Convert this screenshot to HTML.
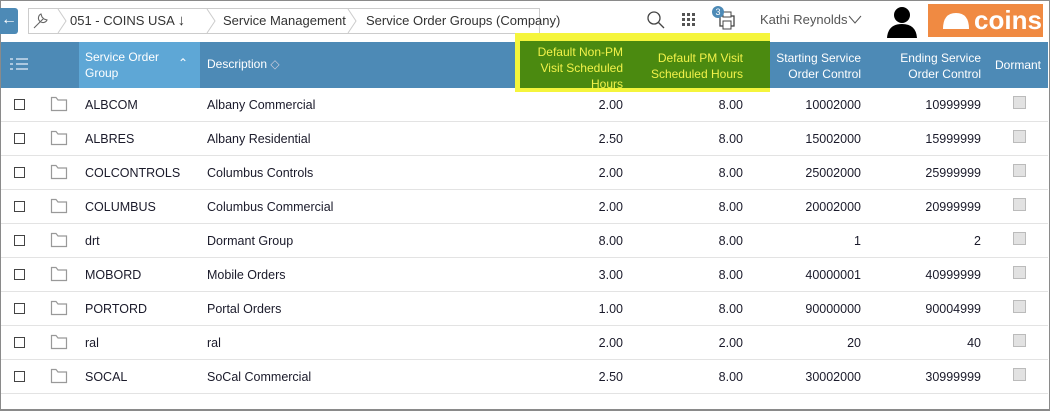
<!DOCTYPE html><html><head><style>
body{margin:0;width:1050px;height:410px;overflow:hidden;font-family:"Liberation Sans",sans-serif;background:#fff;position:relative}
.frame{position:absolute;left:0;top:0;width:1048px;height:408px;border:1px solid #8a8a8a;border-bottom-width:2px}
.abs{position:absolute}
.crumb{position:absolute;top:8px;height:24px;border:1px solid #ccc;background:#fff;font-size:13px;color:#333;line-height:24px}
.hdr{position:absolute;top:42px;left:1px;width:1047px;height:46px;background:#4d8ab6}
.hc{position:absolute;color:#fff;font-size:12px;line-height:16px}
.row{position:absolute;left:1px;width:1047px;height:33px;border-bottom:1px solid #e3e3e3;font-size:12.5px;color:#1a1a2a}
.row span{position:absolute;top:10px}
.cb{position:absolute;left:13px;top:11px;width:9px;height:9px;border:1px solid #444}
.fd{position:absolute;left:49px;top:8px}
.dm{position:absolute;left:1012px;top:8px;width:11px;height:11px;border:1px solid #bbb;background:#e2e2e2}
.r{text-align:right}
</style></head><body>
<div class="frame"></div>
<div class="abs" style="left:0;top:8px;width:18px;height:26px;background:#4d8ab6;border-radius:0 3px 3px 0;color:#fff;font-size:16px;line-height:24px;text-align:center">←</div>
<div class="crumb" style="left:28px;width:510px"></div>
<svg class="abs" style="left:30px;top:9px" width="520" height="24"><g fill="none" stroke="#ccc"><path d="M28 0 L36 12 L28 24"/><path d="M177 0 L185 12 L177 24"/><path d="M318 0 L326 12 L318 24"/></g>
<path d="M4 19 L13 10 M11 5 a4.5 4.5 0 1 0 6 6 L14 10 L12 8 Z" stroke="#666" fill="none" stroke-width="1.1"/></svg>
<div class="abs" style="left:70px;top:8px;font-size:13px;line-height:26px;color:#333">051 - COINS USA <span style="font-size:15px">↓</span></div>
<div class="abs" style="left:223px;top:8px;font-size:13px;line-height:26px;color:#333">Service Management</div>
<div class="abs" style="left:366px;top:8px;font-size:13px;line-height:26px;color:#333">Service Order Groups (Company)</div>
<svg class="abs" style="left:646px;top:10px" width="20" height="20"><circle cx="8" cy="8" r="6" fill="none" stroke="#444" stroke-width="1.3"/><path d="M12.5 12.5 L18 18" stroke="#444" stroke-width="1.3"/></svg>
<svg class="abs" style="left:682px;top:13px" width="16" height="16" fill="#555"><rect x="0" y="0" width="3" height="3"/><rect x="5" y="0" width="3" height="3"/><rect x="10" y="0" width="3" height="3"/><rect x="0" y="5" width="3" height="3"/><rect x="5" y="5" width="3" height="3"/><rect x="10" y="5" width="3" height="3"/><rect x="0" y="10" width="3" height="3"/><rect x="5" y="10" width="3" height="3"/><rect x="10" y="10" width="3" height="3"/></svg>
<svg class="abs" style="left:710px;top:4px" width="30" height="28"><rect x="10" y="12" width="14" height="10" fill="none" stroke="#444" stroke-width="1.3"/><rect x="13" y="8" width="8" height="5" fill="#fff" stroke="#444"/><rect x="13" y="17" width="8" height="8" fill="#fff" stroke="#444"/><circle cx="8" cy="8" r="6" fill="#4d8ab6"/><text x="8" y="11" font-size="9" fill="#fff" text-anchor="middle" font-family="Liberation Sans">3</text></svg>
<div class="abs" style="left:760px;top:12px;font-size:13px;color:#555">Kathi Reynolds</div>
<svg class="abs" style="left:848px;top:15px" width="14" height="10"><path d="M1 1 L7 8 L13 1" fill="none" stroke="#555"/></svg>
<svg class="abs" style="left:884px;top:4px" width="36" height="34"><circle cx="18" cy="11" r="8" fill="#000"/><path d="M3 34 Q4 20 18 20 Q32 20 33 34Z" fill="#000"/></svg>
<div class="abs" style="left:928px;top:4px;width:115px;height:33px;background:#f08a42"></div>
<svg class="abs" style="left:942px;top:11px" width="32" height="20"><path d="M1 18 Q1 2 14 2 Q27 2 27 18Z" fill="#fff"/></svg>
<div class="abs" style="left:974px;top:4px;font-size:26px;font-weight:bold;color:#fff;line-height:32px">coins</div>
<div class="hdr"></div>
<div class="abs" style="left:79px;top:42px;width:121px;height:46px;background:#5ea7d6"></div>
<div class="abs" style="left:515px;top:33px;width:255px;height:59px;background:#f5f53c"></div>
<div class="abs" style="left:520px;top:41px;width:250px;height:47px;background:#4b8a10"></div>
<svg class="abs" style="left:10px;top:58px" width="20" height="14" stroke="#cde" stroke-width="1.5"><path d="M0 1H3M6 1H18M0 6H3M6 6H18M0 11H3M6 11H18"/></svg>
<div class="hc" style="left:85px;top:49px">Service Order<br>Group</div>
<div class="hc" style="left:178px;top:55px">⌃</div>
<div class="hc" style="left:207px;top:56px">Description <span style="color:#ccd">◇</span></div>
<div class="hc r" style="left:520px;width:103px;top:44px;color:#f2f24a">Default Non-PM<br>Visit Scheduled<br>Hours</div>
<div class="hc r" style="left:630px;width:113px;top:50px;color:#f2f24a">Default PM Visit<br>Scheduled Hours</div>
<div class="hc r" style="left:750px;width:111px;top:50px">Starting Service<br>Order Control</div>
<div class="hc r" style="left:860px;width:121px;top:50px">Ending Service<br>Order Control</div>
<div class="hc" style="left:995px;top:57px">Dormant</div>
<div id="rows"></div>
<script>
var d=[["ALBCOM","Albany Commercial","2.00","8.00","10002000","10999999"],["ALBRES","Albany Residential","2.50","8.00","15002000","15999999"],["COLCONTROLS","Columbus Controls","2.00","8.00","25002000","25999999"],["COLUMBUS","Columbus Commercial","2.00","8.00","20002000","20999999"],["drt","Dormant Group","8.00","8.00","1","2"],["MOBORD","Mobile Orders","3.00","8.00","40000001","40999999"],["PORTORD","Portal Orders","1.00","8.00","90000000","90004999"],["ral","ral","2.00","2.00","20","40"],["SOCAL","SoCal Commercial","2.50","8.00","30002000","30999999"]];
var h="";d.forEach(function(r,i){h+='<div class="row" style="top:'+(88+i*34)+'px"><div class="cb"></div><svg class="fd" width="18" height="16"><path d="M1.5 1.5H6L8 4H16.5V14.5H1.5Z" fill="none" stroke="#999" stroke-width="1.2"/></svg><span style="left:84px">'+r[0]+'</span><span style="left:206px">'+r[1]+'</span><span class="r" style="left:520px;width:102px">'+r[2]+'</span><span class="r" style="left:640px;width:102px">'+r[3]+'</span><span class="r" style="left:740px;width:120px">'+r[4]+'</span><span class="r" style="left:860px;width:120px">'+r[5]+'</span><div class="dm"></div></div>'});
document.getElementById("rows").innerHTML=h;
</script>
</body></html>
